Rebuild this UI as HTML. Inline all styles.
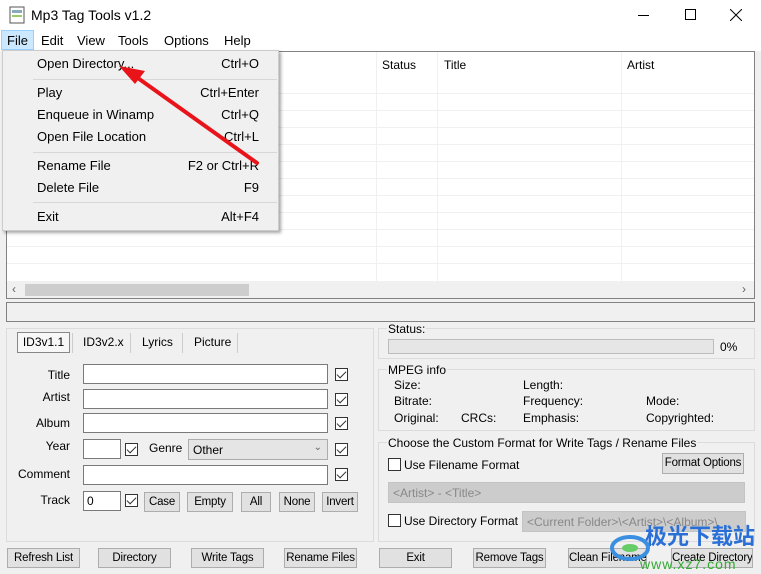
<!DOCTYPE html>
<html><head><meta charset="utf-8"><style>
*{box-sizing:border-box;margin:0;padding:0}
body{width:761px;height:574px;overflow:hidden;background:#f0f0f0;font-family:"Liberation Sans","Noto Sans CJK SC",sans-serif;font-size:12px;color:#000;position:relative}
.a{position:absolute;white-space:nowrap}
.title{left:0;top:0;width:761px;height:30px;background:#fff}
.menu{left:0;top:30px;width:761px;height:21px;background:#fff;font-size:13px}
.menu span{position:absolute;top:3px}
.list{left:6px;top:51px;width:749px;height:248px;background:#fff;border:1px solid #828282}
.row{position:absolute;left:0;width:747px;height:1px;background:#f0f0f0}
.col{position:absolute;top:0;width:1px;height:230px;background:#f0f0f0}
.inp{position:absolute;background:#fff;border:1px solid #7a7a7a;height:20px}
.cb{position:absolute;width:13px;height:13px;border:1px solid #333;background:#fff}
.cb.c::after{content:"";position:absolute;left:3px;top:0px;width:4px;height:8px;border:solid #333;border-width:0 1px 1px 0;transform:rotate(45deg)}
.btn{position:absolute;background:#e1e1e1;border:1px solid #adadad;text-align:center;line-height:18px;height:20px;white-space:nowrap;overflow:hidden;font-size:11.5px;letter-spacing:-0.2px}
.grp{position:absolute;border:1px solid #dcdcdc}
.lbl{position:absolute;white-space:nowrap}
.r{text-align:right}
.dd{left:2px;top:50px;width:277px;height:181px;background:#f0f0f0;border:1px solid #ccc;box-shadow:2px 2px 3px rgba(0,0,0,.35);font-size:13px}
.dd .it{position:absolute;left:34px;width:222px}
.dd .it b{font-weight:normal;position:absolute;right:0}
.dd .sep{position:absolute;left:30px;width:244px;height:1px;background:#d7d7d7}
</style></head><body>
<div class="a title">
<svg class="a" style="left:9px;top:6px" width="16" height="18"><rect x="1" y="1" width="14" height="16" fill="#fff" stroke="#555"/><rect x="3" y="4" width="10" height="3" fill="#8ab"/><rect x="3" y="9" width="10" height="2" fill="#9c6"/></svg>
<div class="a" style="left:31px;top:7px;font-size:14px">Mp3 Tag Tools v1.2</div>
<div class="a" style="left:638px;top:15px;width:11px;height:1px;background:#000"></div>
<div class="a" style="left:685px;top:9px;width:11px;height:11px;border:1px solid #000"></div>
<svg class="a" style="left:730px;top:9px" width="12" height="12"><path d="M0 0L12 12M12 0L0 12" stroke="#000"/></svg>
</div>
<div class="a menu">
<div class="a" style="left:1px;top:0;width:33px;height:20px;background:#cce8ff;border:1px solid #99d1ff"></div>
<span style="left:7px">File</span><span style="left:41px">Edit</span><span style="left:77px">View</span><span style="left:118px">Tools</span><span style="left:164px">Options</span><span style="left:224px">Help</span>
</div>
<div class="a list">
<div class="a" style="left:0;top:0;width:747px;height:24px;background:#fff"></div>
<div class="a" style="left:375px;top:6px">Status</div>
<div class="a" style="left:437px;top:6px">Title</div>
<div class="a" style="left:620px;top:6px">Artist</div>
<div class="col" style="left:369px"></div><div class="col" style="left:430px"></div><div class="col" style="left:614px"></div>
<div class="row" style="top:41px"></div><div class="row" style="top:58px"></div><div class="row" style="top:75px"></div><div class="row" style="top:92px"></div><div class="row" style="top:109px"></div><div class="row" style="top:126px"></div><div class="row" style="top:143px"></div><div class="row" style="top:160px"></div><div class="row" style="top:177px"></div><div class="row" style="top:194px"></div><div class="row" style="top:211px"></div>
<div class="a" style="left:0;top:229px;width:747px;height:17px;background:#f0f0f0"></div>
<div class="a" style="left:18px;top:232px;width:224px;height:12px;background:#cdcdcd"></div>
<div class="a" style="left:5px;top:230px;color:#606060;font-size:12px">&lsaquo;</div>
<div class="a" style="left:735px;top:230px;color:#606060;font-size:12px">&rsaquo;</div>
</div>
<div class="a" style="left:6px;top:302px;width:749px;height:20px;border:1px solid #828282;background:#f0f0f0"></div>

<div class="grp" style="left:6px;top:328px;width:368px;height:214px"></div>
<div class="a" style="left:17px;top:332px;width:53px;height:21px;border:1px solid #888;background:#f7f7f7;text-align:center;line-height:19px">ID3v1.1</div>
<div class="a" style="left:83px;top:335px">ID3v2.x</div>
<div class="a" style="left:142px;top:335px">Lyrics</div>
<div class="a" style="left:194px;top:335px">Picture</div>
<div class="a" style="left:72px;top:333px;width:1px;height:20px;background:#ccc"></div>
<div class="a" style="left:130px;top:333px;width:1px;height:20px;background:#ccc"></div>
<div class="a" style="left:182px;top:333px;width:1px;height:20px;background:#ccc"></div>
<div class="a" style="left:237px;top:333px;width:1px;height:20px;background:#ccc"></div>
<div class="lbl r" style="left:10px;width:60px;top:368px">Title</div>
<div class="lbl r" style="left:10px;width:60px;top:390px">Artist</div>
<div class="lbl r" style="left:10px;width:60px;top:416px">Album</div>
<div class="lbl r" style="left:10px;width:60px;top:439px">Year</div>
<div class="lbl r" style="left:10px;width:60px;top:467px">Comment</div>
<div class="lbl r" style="left:10px;width:60px;top:493px">Track</div>
<div class="inp" style="left:83px;top:364px;width:245px"></div>
<div class="inp" style="left:83px;top:389px;width:245px"></div>
<div class="inp" style="left:83px;top:413px;width:245px"></div>
<div class="inp" style="left:83px;top:439px;width:38px"></div>
<div class="inp" style="left:83px;top:465px;width:245px"></div>
<div class="inp" style="left:83px;top:491px;width:38px;padding-left:3px;line-height:18px">0</div>
<div class="cb c" style="left:335px;top:368px"></div>
<div class="cb c" style="left:335px;top:393px"></div>
<div class="cb c" style="left:335px;top:417px"></div>
<div class="cb c" style="left:335px;top:443px"></div>
<div class="cb c" style="left:335px;top:468px"></div>
<div class="cb c" style="left:125px;top:443px"></div>
<div class="cb c" style="left:125px;top:494px"></div>
<div class="lbl" style="left:149px;top:441px">Genre</div>
<div class="a" style="left:188px;top:439px;width:140px;height:21px;background:#e5e5e5;border:1px solid #acacac;padding:3px 4px">Other<span style="position:absolute;right:5px;top:2px;color:#666;font-size:10px">&#8964;</span></div>
<div class="btn" style="left:144px;top:492px;width:36px">Case</div>
<div class="btn" style="left:187px;top:492px;width:46px">Empty</div>
<div class="btn" style="left:241px;top:492px;width:30px">All</div>
<div class="btn" style="left:279px;top:492px;width:36px">None</div>
<div class="btn" style="left:322px;top:492px;width:36px">Invert</div>

<div class="grp" style="left:378px;top:328px;width:377px;height:31px"></div>
<div class="lbl" style="left:387px;top:322px;background:#f0f0f0;padding:0 1px">Status:</div>
<div class="a" style="left:388px;top:339px;width:326px;height:15px;background:#e6e6e6;border:1px solid #bcbcbc"></div>
<div class="lbl" style="left:720px;top:340px">0%</div>
<div class="grp" style="left:378px;top:369px;width:377px;height:62px"></div>
<div class="lbl" style="left:387px;top:363px;background:#f0f0f0;padding:0 1px">MPEG info</div>
<div class="lbl" style="left:394px;top:378px">Size:</div>
<div class="lbl" style="left:523px;top:378px">Length:</div>
<div class="lbl" style="left:394px;top:394px">Bitrate:</div>
<div class="lbl" style="left:523px;top:394px">Frequency:</div>
<div class="lbl" style="left:646px;top:394px">Mode:</div>
<div class="lbl" style="left:394px;top:411px">Original:</div>
<div class="lbl" style="left:461px;top:411px">CRCs:</div>
<div class="lbl" style="left:523px;top:411px">Emphasis:</div>
<div class="lbl" style="left:646px;top:411px">Copyrighted:</div>
<div class="grp" style="left:378px;top:442px;width:377px;height:100px"></div>
<div class="lbl" style="left:387px;top:436px;background:#f0f0f0;padding:0 1px">Choose the Custom Format for Write Tags / Rename Files</div>
<div class="cb" style="left:388px;top:458px"></div>
<div class="lbl" style="left:404px;top:458px">Use Filename Format</div>
<div class="btn" style="left:662px;top:453px;width:82px;height:21px">Format Options</div>
<div class="a" style="left:388px;top:482px;width:357px;height:21px;background:#ccc;border:1px solid #c4c4c4;color:#888;padding:3px 4px">&lt;Artist&gt; - &lt;Title&gt;</div>
<div class="cb" style="left:388px;top:514px"></div>
<div class="lbl" style="left:404px;top:514px">Use Directory Format</div>
<div class="a" style="left:522px;top:511px;width:224px;height:21px;background:#ccc;border:1px solid #c4c4c4;color:#888;padding:3px 4px;overflow:hidden">&lt;Current Folder&gt;\&lt;Artist&gt;\&lt;Album&gt;\</div>

<div class="btn" style="left:7px;top:548px;width:73px">Refresh List</div>
<div class="btn" style="left:98px;top:548px;width:73px">Directory</div>
<div class="btn" style="left:191px;top:548px;width:73px">Write Tags</div>
<div class="btn" style="left:284px;top:548px;width:73px">Rename Files</div>
<div class="btn" style="left:379px;top:548px;width:73px">Exit</div>
<div class="btn" style="left:473px;top:548px;width:73px">Remove Tags</div>
<div class="btn" style="left:568px;top:548px;width:79px">Clean Filenames</div>
<div class="btn" style="left:671px;top:548px;width:82px">Create Directory</div>
<div class="a" style="left:645px;top:522px;font-size:22px;font-weight:bold;color:#2a6fd6;font-family:'Noto Sans CJK SC',sans-serif;line-height:26px">极光下载站</div>
<div class="a" style="left:640px;top:556px;font-size:14px;color:#3a3;letter-spacing:1px">www.xz7.com</div>
<svg class="a" style="left:605px;top:528px" width="50" height="40"><ellipse cx="25" cy="20" rx="18" ry="11" fill="none" stroke="#3a8fe0" stroke-width="4"/><ellipse cx="25" cy="20" rx="8" ry="4" fill="#6c6"/></svg>

<div class="a dd">
<div class="it" style="top:5px">Open Directory...<b>Ctrl+O</b></div>
<div class="sep" style="top:28px"></div>
<div class="it" style="top:34px">Play<b>Ctrl+Enter</b></div>
<div class="it" style="top:56px">Enqueue in Winamp<b>Ctrl+Q</b></div>
<div class="it" style="top:78px">Open File Location<b>Ctrl+L</b></div>
<div class="sep" style="top:101px"></div>
<div class="it" style="top:107px">Rename File<b>F2 or Ctrl+R</b></div>
<div class="it" style="top:129px">Delete File<b>F9</b></div>
<div class="sep" style="top:151px"></div>
<div class="it" style="top:158px">Exit<b>Alt+F4</b></div>
</div>
<svg class="a" style="left:0;top:0" width="300" height="200"><line x1="257" y1="163" x2="135" y2="76" stroke="#e8141a" stroke-width="4" stroke-linecap="round"/><path d="M119 66L145 71L135 84Z" fill="#e8141a"/></svg>
</body></html>
